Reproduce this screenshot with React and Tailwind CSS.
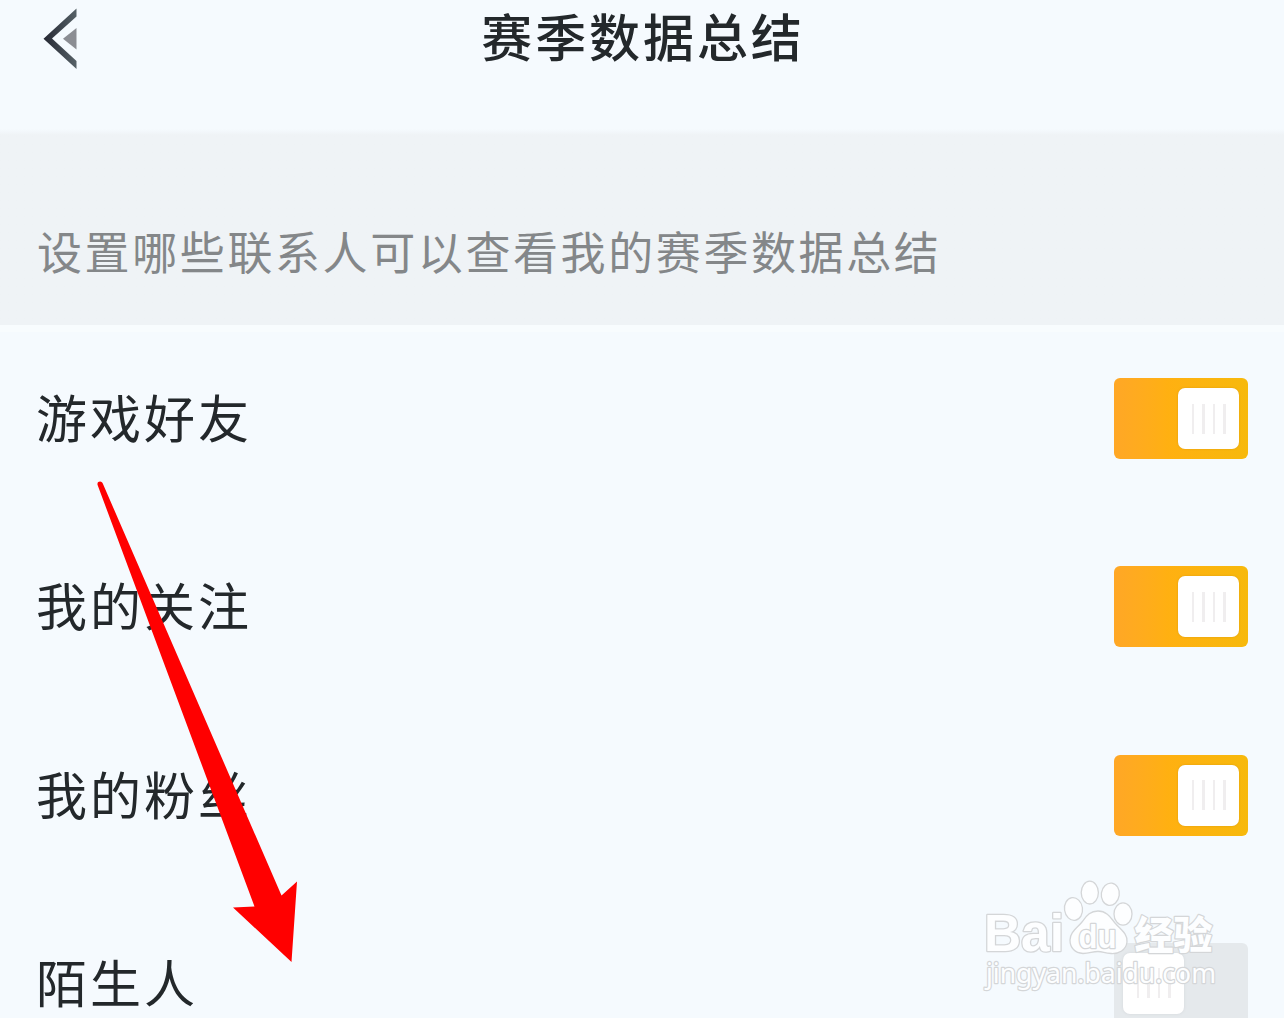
import { useState } from "react";
import clsx from "clsx";

const CONTACTS = [
	{ id: "friends", label: "游戏好友", on: true },
	{ id: "following", label: "我的关注", on: true },
	{ id: "fans", label: "我的粉丝", on: true },
	{ id: "strangers", label: "陌生人", on: false },
];

const BackIcon = () => (
	<svg width="36" height="62" viewBox="0 0 36 62" className="block">
		<defs>
			<linearGradient id="back" x1="0" x2="1">
				<stop offset="0" stopColor="#252833" />
				<stop offset="1" stopColor="#566167" />
			</linearGradient>
		</defs>
		<path d="M33.5 0.5V8.5L9 30.5L33.5 53V61L0.5 30.8Z" fill="url(#back)" />
		<path d="M33.5 20V41.5L20 30.8Z" fill="#8b8d93" />
	</svg>
);

const Toggle = ({ on, onChange }) => (
	<button
		type="button"
		role="switch"
		aria-checked={on}
		onClick={onChange}
		className={clsx(
			"flex h-[81px] w-[134px] shrink-0 items-center rounded-[6px] px-[9px]",
			on ? "justify-end bg-linear-to-r from-[#ffa726] via-[#ffb011] via-40% to-[#f7b90c]" : "justify-start bg-[#e5e9ec]"
		)}
	>
		<span
			className={clsx(
				"flex size-[61px] items-center justify-center gap-[8px] rounded-[7px] bg-white",
				on ? "shadow-[0_0_2px_#d99a10]" : "shadow-[0_0_3px_#d3d7da]"
			)}
		>
			{[0, 1, 2, 3].map((i) => (
				<span key={i} className="h-[30px] w-[2.5px] bg-[#f0eeef]" />
			))}
		</span>
	</button>
);

const Arrow = () => (
	<svg width="210" height="484" viewBox="92 480 210 484" className="pointer-events-none absolute top-[480px] left-[92px]">
		<path
			d="M97.6 485C97 482.5 98.5 481.5 100 481.5C101.5 481.5 102.5 482.5 103 484L281.5 895.5L297 881.5L291.5 962L233 907.5L254.5 906.5Z"
			fill="#ff0000"
		/>
	</svg>
);

const Watermark = () => (
	<svg
		width="240"
		height="124"
		viewBox="980 874 240 124"
		className="pointer-events-none absolute top-[874px] left-[980px]"
		fill="#fdfeff"
		stroke="#d4d6d8"
		strokeWidth="1.3"
		strokeLinejoin="round"
	>
		<ellipse cx="1089.8" cy="892.6" rx="8.6" ry="11.4" />
		<ellipse cx="1110.3" cy="894.2" rx="9" ry="11.2" transform="rotate(8 1110.3 894.2)" />
		<ellipse cx="1073.5" cy="909" rx="9" ry="11.4" transform="rotate(-8 1073.5 909)" />
		<ellipse cx="1123" cy="914" rx="9" ry="11.2" />
		<path d="M1098 911C1107 911 1111 918 1115 923C1121 930 1128 934 1127 942C1126 950 1119 954 1111 953.5C1104 953 1103 951.5 1098 951.5C1092 951.5 1090 953.5 1083 953.5C1075 953 1070 948 1070 940C1070 932 1077 928 1082 922C1086 917 1089 911 1098 911Z" />
		<g className="font-['Liberation_Sans'] font-bold" paintOrder="stroke" strokeWidth="2.6">
			<text x="984" y="951" fontSize="51" textLength="80" lengthAdjust="spacingAndGlyphs">Bai</text>
			<text x="1078.5" y="947.5" fontSize="33" textLength="38" lengthAdjust="spacingAndGlyphs">du</text>
		</g>
		<g paintOrder="stroke" strokeWidth="2.4">
			<text x="1134.5" y="948.5" fontSize="39" textLength="78" className="font-['Noto_Sans_CJK_SC',sans-serif] font-black">
				经验
			</text>
			<text x="986" y="982.5" fontSize="26.5" textLength="230" lengthAdjust="spacingAndGlyphs" className="font-['Noto_Sans',sans-serif]">
				jingyan.baidu.com
			</text>
		</g>
	</svg>
);

const App = () => {
	const [contacts, setContacts] = useState(CONTACTS);

	const toggle = (id) => {
		setContacts((prev) => prev.map((c) => (c.id === id ? { ...c, on: !c.on } : c)));
	};

	return (
		<div className="relative h-[1018px] w-full overflow-hidden bg-[#f5fafe] font-['Liberation_Sans','Noto_Sans_CJK_SC',sans-serif] text-[#23282b]">
			<header className="grid h-[129px] grid-cols-[1fr_auto_1fr] items-start">
				<button type="button" aria-label="返回" className="mt-[8px] ml-[43px] w-9">
					<BackIcon />
				</button>
				<h1 className="mt-[3px] pl-[2px] text-[51px] leading-[74px] font-medium tracking-[2.9px]">赛季数据总结</h1>
			</header>

			<div className="h-[196px] bg-linear-to-b from-[#f5fafe] to-[#eff3f6] to-[6px] pt-[93px] pl-[37px]">
				<p className="text-[45px] leading-[66px] tracking-[2.6px] text-[#848789]">
					设置哪些联系人可以查看我的赛季数据总结
				</p>
			</div>

			{/* 联系人开关列表 */}
			<ul className="border-t-[7px] border-[#f8fcfe]">
				{contacts.map(({ id, label, on }, i) => (
					<li key={id} className={clsx("flex h-[188.3px] items-center justify-between px-9", i === 0 && "-mt-[7.6px]")}>
						<span className="pt-[5px] text-[51px] leading-[74px] tracking-[3px]">{label}</span>
						<Toggle on={on} onChange={() => toggle(id)} />
					</li>
				))}
			</ul>

			<Arrow />
			<Watermark />
		</div>
	);
};

export default App;
